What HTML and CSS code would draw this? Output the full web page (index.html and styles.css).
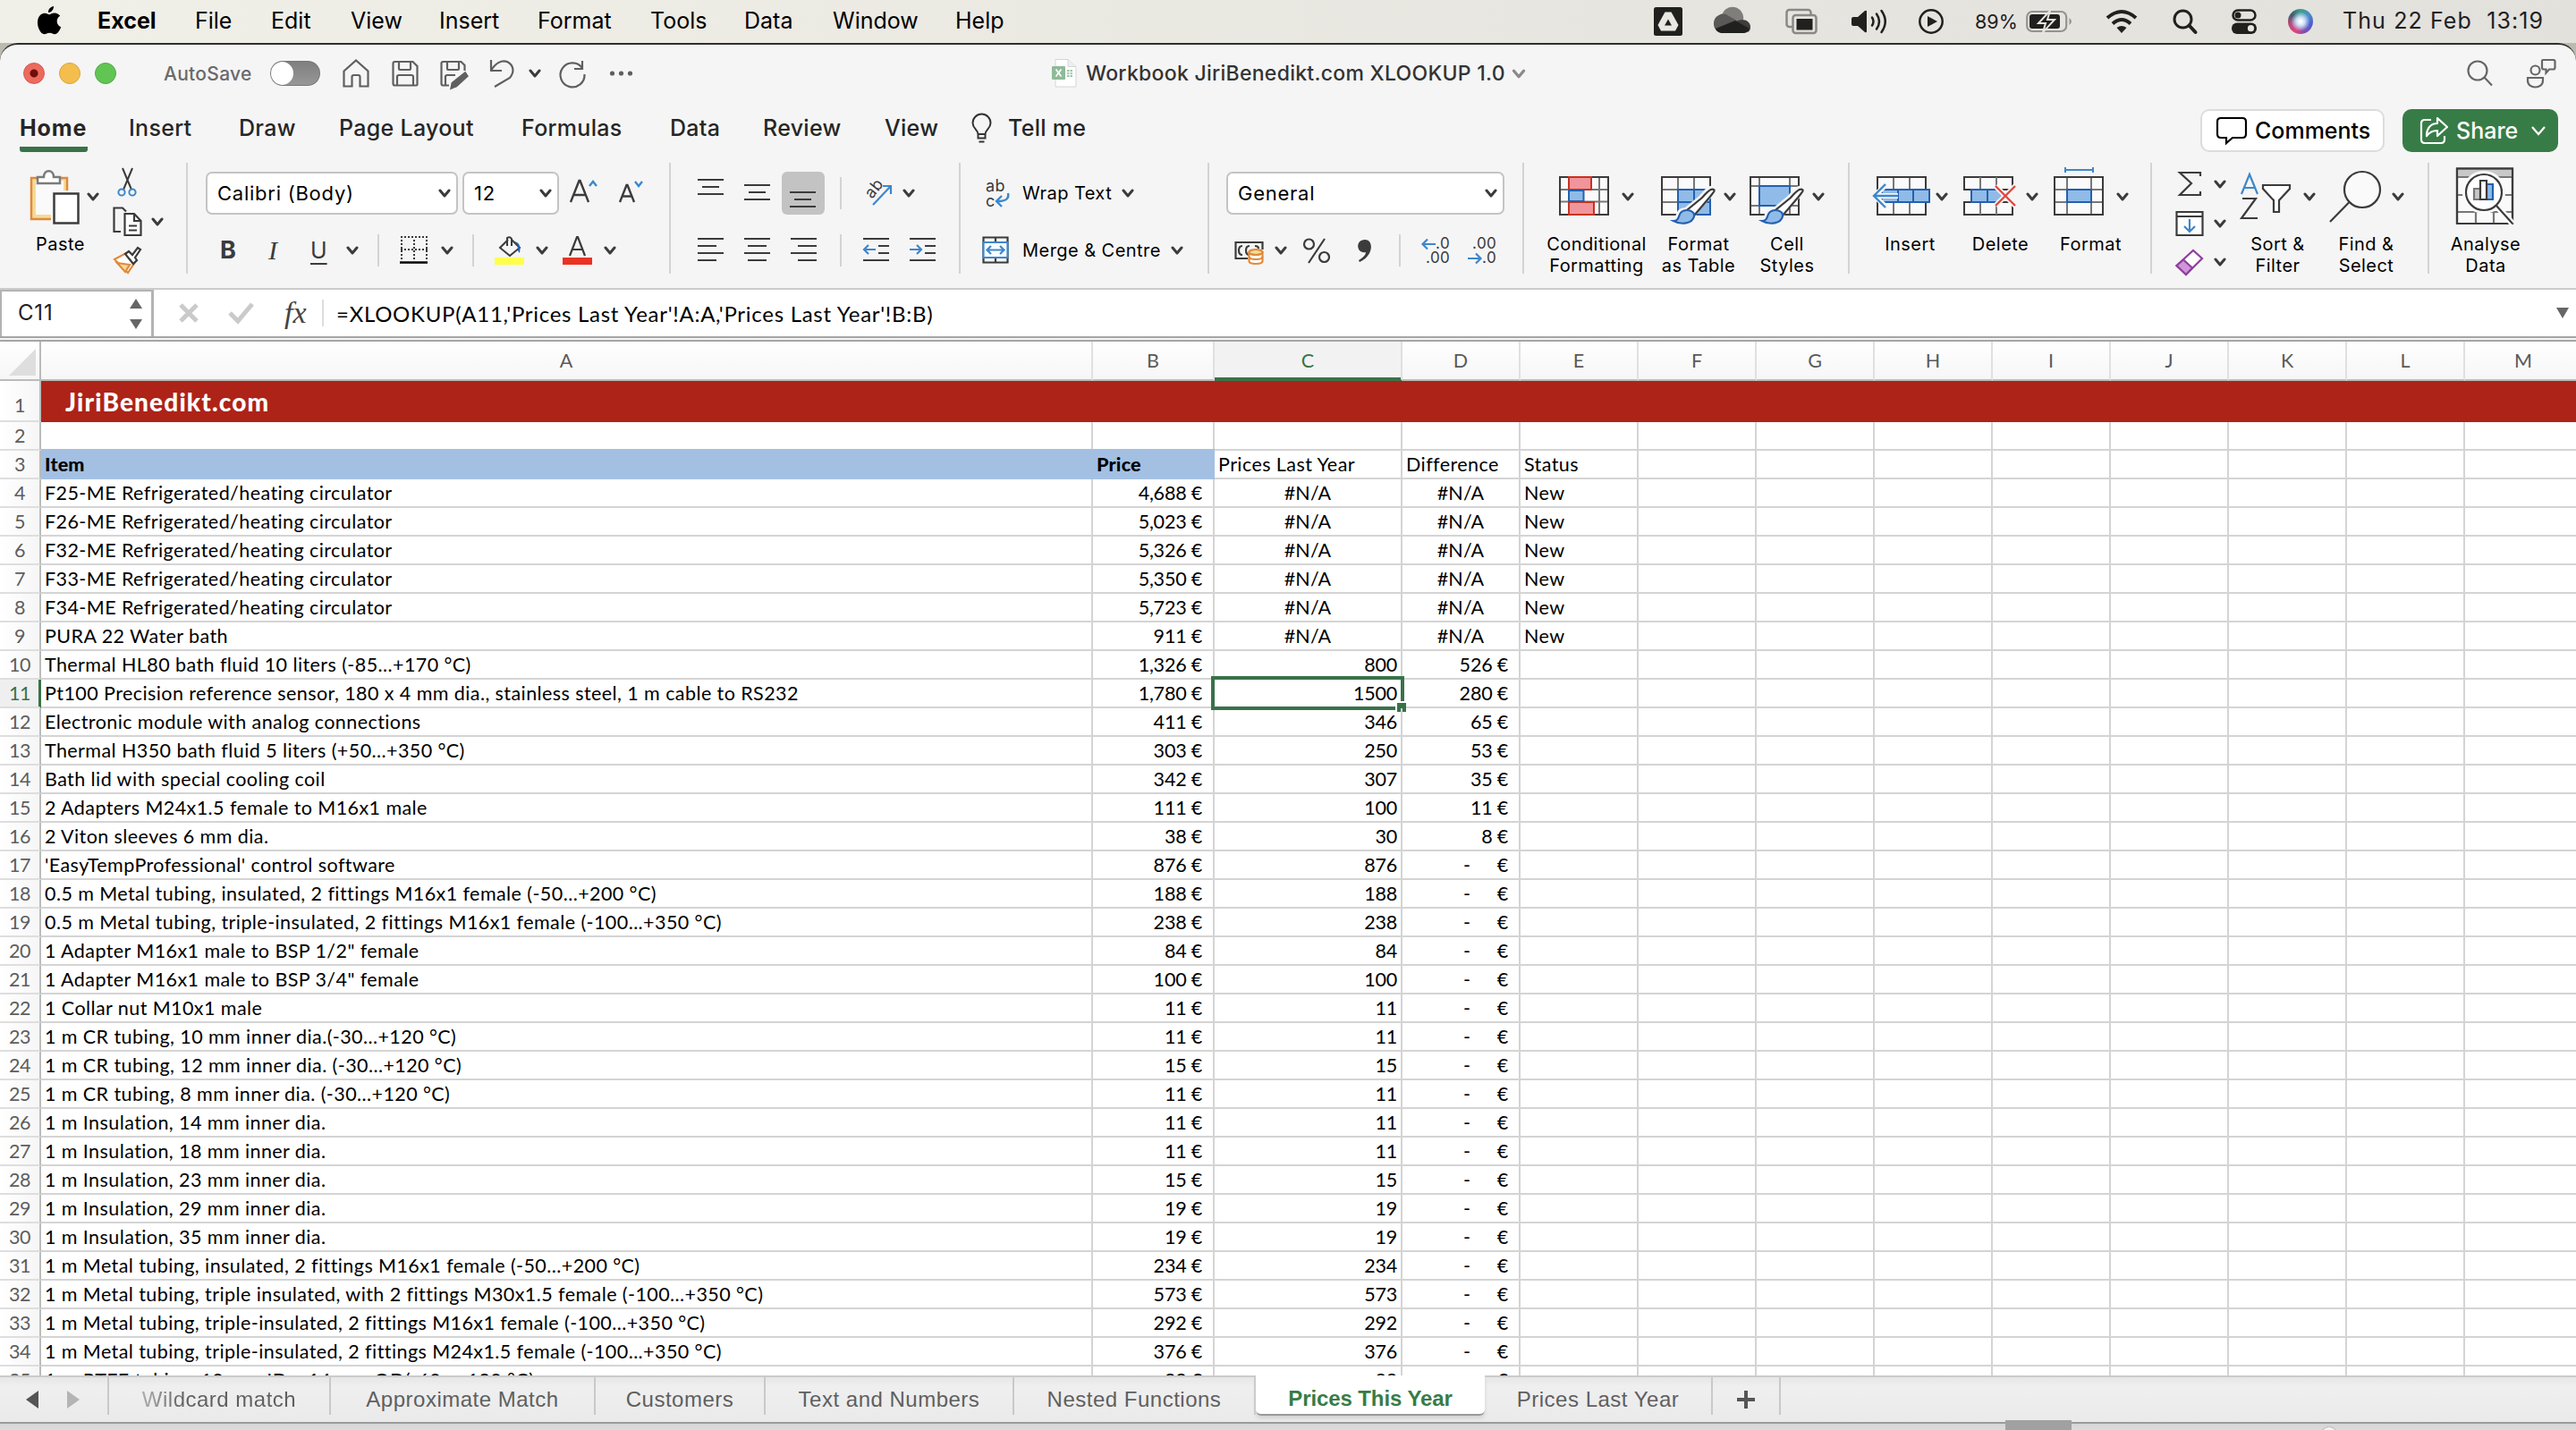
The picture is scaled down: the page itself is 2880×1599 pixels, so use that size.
FILE: index.html
```
<!DOCTYPE html>
<html lang="en">
<head>
    <meta charset="UTF-8">
    <meta name="viewport" content="width=device-width, initial-scale=1.0">
    <title>Workbook JiriBenedikt.com XLOOKUP 1.0</title>
    <link rel="stylesheet" href="styles.css">
</head>
<body>
    <!-- shared icons -->
    <svg class="defs" width="0" height="0">
        <symbol id="chev" viewBox="0 0 14 10"><path d="M2 2l5 6 5-6" fill="none" stroke="currentColor" stroke-width="3" stroke-linecap="round" stroke-linejoin="round"/></symbol>
        <symbol id="brush" viewBox="0 0 66 66" overflow="visible">
            <path d="M59 24c-4-2-9 4-14 10L28 48c-7 0-8 4-9 8-1 3-3 4-5 5 8 5 20 4 22-5 1-3 0-4 0-5l18-19c4-4 7-7 5-8z" fill="#f5f5f5" stroke="#f5f5f5" stroke-width="6"/>
            <path d="M59 25c-3-2-8 3-13 9L29 48l8 6 17-20c4-5 7-8 5-9z" fill="#fff" stroke="#3b3b3b" stroke-width="2.2"/>
            <path d="M29 48c-6 0-8 3-9 7-1 4-3 5-6 5 9 5 21 3 23-5 1-4-3-7-8-7z" fill="#90bbe8" stroke="#2460ae" stroke-width="2.2"/>
        </symbol>
    </svg>

    <header class="menubar">
        <nav class="menus">
            <svg class="apple" width="28" height="32" viewBox="0 0 28 32"><path d="M19 0c.3 3.600-2.600 7-6 7C12.600 3.500 15.800.4 19 0zM14 9.200c1.400 0 3.200-1.700 6-1.700 2.500 0 4.900 1.300 6.200 3.300-5.200 3-4.400 10.400 1 12.400-1.200 3.500-4 8-7 8-2.200 0-3-1.400-5.800-1.400s-3.700 1.400-5.800 1.400C4.300 31.200 1 24 1 18.300 1 11.500 5 7.700 9 7.700c2.300 0 3.800 1.500 5 1.500z"/></svg>
            <b>Excel</b><span>File</span><span>Edit</span><span>View</span><span>Insert</span><span>Format</span><span>Tools</span><span>Data</span><span>Window</span><span>Help</span>
        </nav>
        <div class="tray">
            <svg width="32" height="32" viewBox="0 0 32 32"><rect width="32" height="32" rx="2.500" fill="#20201e"/><path d="M12.500 5.500h7l8 14.500-3.500 6.500H8L4.500 20z" fill="#e9e7e1"/><path d="M16 13.500l4 7h-8z" fill="#20201e"/></svg>
            <svg width="42" height="28" viewBox="0 0 42 28"><path d="M9 8a12 12 0 0 1 24 4l-9 2z" fill="#7f7e7b"/><path d="M0 17A10.500 10.500 0 0 1 17 8l14 8-27 9a10 10 0 0 1-4-8z" fill="#5a5957"/><path d="M24 15c7-6 17-2 17 5 0 3-1 5-3 6z" fill="#3e3d3b"/><path d="M2 22l22-9 16 9c-2 4-4 5-7 5H10c-4 0-7-2-8-5z" fill="#20201e"/></svg>
            <svg width="36" height="30" viewBox="0 0 36 30" fill="none"><rect x="1.500" y="2" width="27" height="19" rx="3" stroke="#8a8986" stroke-width="2.500"/><rect x="8.500" y="8" width="26" height="20" rx="3" fill="#e7e5df" stroke="#8a8986" stroke-width="2.500"/><rect x="12.500" y="12" width="18" height="12.500" fill="#20201e"/></svg>
            <svg width="40" height="28" viewBox="0 0 40 28" fill="none" stroke="#20201e" stroke-width="2.500" stroke-linecap="round"><path d="M0 11q0-2 2-2h5l8-7q2-1 2 1v22q0 2-2 1l-8-7H2q-2 0-2-2z" fill="#20201e" stroke="none"/><path d="M23 9.500q3 4.500 0 9M28 5.500q6 8.500 0 17M33.500 2q8.500 12 0 24"/></svg>
            <svg width="28" height="28" viewBox="0 0 28 28"><circle cx="14" cy="14" r="12.700" fill="none" stroke="#20201e" stroke-width="2.500"/><path d="M10 8l11 6-11 6z" fill="#20201e"/></svg>
            <span class="percent">89%</span>
            <svg width="52" height="26" viewBox="0 0 52 26"><rect x="1.200" y="2" width="44" height="22" rx="6" fill="none" stroke="#94938f" stroke-width="2.200"/><rect x="4" y="5" width="34" height="16" rx="3" fill="#20201e"/><path d="M48.500 9q5 4 0 8z" fill="#94938f"/><path d="M27 1L14 15h8l-3 10 13-14h-8z" fill="#20201e" stroke="#e7e5df" stroke-width="2"/></svg>
            <svg width="36" height="26" viewBox="0 0 36 26" fill="none" stroke="#20201e" stroke-width="4"><path d="M2 9q16-14 32 0M8 15.500q10-9 20 0"/><path d="M18 26l-5.500-6q5.500-4 11 0z" fill="#20201e" stroke="none"/></svg>
            <svg width="28" height="28" viewBox="0 0 28 28" fill="none" stroke="#20201e" stroke-width="3"><circle cx="11.500" cy="11.500" r="9.500"/><path d="M18.500 18.500l7 7.500" stroke-width="4" stroke-linecap="round"/></svg>
            <svg width="28" height="28" viewBox="0 0 28 28"><rect x="1.500" y="1.500" width="25" height="11" rx="5.500" fill="none" stroke="#20201e" stroke-width="2.500"/><circle cx="7" cy="7" r="3.500" fill="#20201e"/><rect x="0" y="15.500" width="28" height="12.500" rx="6" fill="#20201e"/><circle cx="21.500" cy="21.700" r="3.600" fill="#e7e5df"/></svg>
            <i class="siri"></i>
            <span class="clock">Thu 22 Feb  13:19</span>
        </div>
    </header>

    <main class="window">
        <div class="titlebar">
            <div class="quick">
                <i class="light close"></i><i class="light minimise"></i><i class="light zoom"></i>
                <span class="autosave">AutoSave</span>
                <i class="toggle"></i>
                <svg width="30" height="32" viewBox="0 0 30 32"><path d="M1.500 13.500L15 1.500l13.500 12V30.500h-9V20q0-2-2-2h-5q-2 0-2 2v10.500h-9z"/></svg>
                <svg width="30" height="32" viewBox="0 0 30 32"><path d="M3.500 3h20l5 5v20.500q0 1-1 1h-24q-2 0-2-2V5q0-2 2-2zM8 3v8q0 1 1 1h11q1 0 1-1V3M6 29.500V20q0-2 2-2h14q2 0 2 2v9.500"/></svg>
                <svg width="32" height="32" viewBox="0 0 32 32"><path d="M10 29.500H3.500q-2 0-2-2V5q0-2 2-2h20l4 4v6M8 3v8q0 1 1 1h11q1 0 1-1V3M6 29.500V20q0-2 2-2h9"/><path d="M28 16l2 3-12 11-5 2 1-5z" fill="#5f5f5f" stroke-width="3"/></svg>
                <svg width="30" height="32" viewBox="0 0 30 32"><path d="M2 1v12h12M2 13C7 4 14 1 20 3c8 4 8 12 3 18L6 31"/></svg>
                <svg class="chev" width="14" height="10"><use href="#chev"/></svg>
                <svg width="30" height="32" viewBox="0 0 30 32"><path d="M26 2v9h-9M26 10A13.500 13.500 0 1 0 28.500 17"/></svg>
                <svg width="28" height="32" viewBox="0 0 28 32"><g fill="#5f5f5f" stroke="none"><circle cx="3.500" cy="16" r="2.600"/><circle cx="13.500" cy="16" r="2.600"/><circle cx="23.500" cy="16" r="2.600"/></g></svg>
            </div>
            <div class="doc">
                <svg width="28" height="32" viewBox="0 0 28 32"><path d="M4 .5h14l9 8V31H4z" fill="#fff" stroke="#d5d5d5"/><path d="M18 .5v8h9" fill="#eee" stroke="#d5d5d5"/><path d="M17 12h6v8h-6z" fill="#9cc5a6"/><path d="M17 14.700h6M17 17.400h6M20 12v8" stroke="#fff"/><rect y="8" width="15" height="15" rx="1" fill="#8fba99"/><path d="M4.500 11.500l6 8M10.500 11.500l-6 8" stroke="#fff" stroke-width="1.800"/></svg>
                <span>Workbook JiriBenedikt.com XLOOKUP 1.0</span>
                <svg class="grey" width="18" height="11"><use href="#chev"/></svg>
            </div>
            <div class="corner">
                <svg width="30" height="30" viewBox="0 0 30 30"><circle cx="12" cy="12" r="10.500"/><path d="M19.500 19.500l8.500 9"/></svg>
                <svg width="34" height="34" viewBox="0 0 34 34"><circle cx="10.500" cy="13.500" r="5"/><path d="M2 22h17v3c0 10-17 10-17 0zM19 2h12q1.500 0 1.500 1.500v7q0 2-2 2H26l-3.500 4v-4H20q-2 0-2-2V3q0-1 1-1z"/></svg>
            </div>
        </div>

        <div class="tabs">
            <nav class="tablist">
                <b class="active">Home</b><span>Insert</span><span>Draw</span><span>Page Layout</span><span>Formulas</span><span>Data</span><span>Review</span><span>View</span>
                <svg width="24" height="34" viewBox="0 0 24 34" fill="none" stroke="#333" stroke-width="2"><path d="M7.500 23c0-5-6-6-6-12.500a10 10 0 0 1 20 0C21.500 17 15.500 18 15.500 23zM7.500 22v5.500h8V22M8.500 31.500h6"/></svg>
                <span>Tell me</span>
            </nav>
            <div class="actions">
                <button class="comments"><svg width="34" height="32" viewBox="0 0 34 32" fill="none" stroke="#000" stroke-width="2.200"><path d="M5 2h24q4 0 4 4v14q0 4-4 4H18l-7 6v-6H5q-4 0-4-4V6q0-4 4-4z"/></svg>Comments</button>
                <button class="share"><svg width="32" height="32" viewBox="0 0 32 32" fill="none" stroke="#fff" stroke-width="2.200" stroke-linejoin="round"><path d="M13 4H6Q2 4 2 8v18q0 4 4 4h18q4 0 4-4v-4"/><path d="M20 2l11 10-11 10v-6c-6 0-9 2-12 6 0-8 4-14 12-14z"/></svg>Share<svg width="18" height="12" viewBox="0 0 18 12" fill="none" stroke="#fff" stroke-width="2.200"><path d="M2 2l7 8 7-8"/></svg></button>
            </div>
        </div>

        <div class="ribbon">
            <section class="group clipboard">
                <div class="big paste">
                    <div class="art">
                        <svg width="58" height="64" viewBox="0 0 58 64"><path d="M2 11h40v46H2z" fill="#f5db96" stroke="#e08a3c" stroke-width="2.500"/><path d="M7 14v38h31V14z" fill="#fafafa"/><path d="M9 17v-7h7c0-9 11-9 11 0h7v7z" fill="#fff" stroke="#7b7b7b" stroke-width="2.500"/><path d="M24 25h35v39H24z" fill="#f5f5f5"/><path d="M27.500 28.500h27v33h-27z" fill="#fff" stroke="#3b3b3b" stroke-width="2.500"/></svg>
                        <svg class="chev" width="14" height="10"><use href="#chev"/></svg>
                    </div>
                    <span>Paste</span>
                </div>
                <div class="stack">
                    <div><svg width="32" height="32" viewBox="0 0 32 32" fill="none" stroke-width="2"><path d="M11 0l10 24M22 0L12 24" stroke="#3b3b3b"/><circle cx="10" cy="27" r="3.600" stroke="#3e87cb"/><circle cx="22" cy="27" r="3.600" stroke="#3e87cb"/></svg></div>
                    <div><svg width="34" height="34" viewBox="0 0 34 34" fill="none" stroke="#3b3b3b" stroke-width="2.200"><path d="M9 28H1.500V1.500H11l4 4"/><path d="M13.500 8H24l7.500 8v16h-18z" fill="#fff"/><path d="M24 8v8h7.500M18 21.500h9M18 26.500h9"/></svg><svg class="chev" width="14" height="10"><use href="#chev"/></svg></div>
                    <div><svg width="34" height="32" viewBox="0 0 34 32" fill="none" stroke-width="2.200"><path d="M2 15l13-7 10 10-8 12z" fill="#fff" stroke="#e08a3c"/><path d="M5 19l14 2-5 8z" fill="#f5db96" stroke="#e08a3c"/><path d="M14 9l4-3 4 4 6-8 3 2-6 9 2 3-4 4z" fill="#fff" stroke="#3b3b3b"/></svg></div>
                </div>
            </section>

            <section class="group font">
                <div class="row">
                    <div class="select">Calibri (Body)<svg class="chev" width="14" height="10"><use href="#chev"/></svg></div>
                    <div class="select">12<svg class="chev" width="14" height="10"><use href="#chev"/></svg></div>
                    <svg width="32" height="32" viewBox="0 0 32 32" fill="none" stroke="#3b3b3b" stroke-width="2.400"><path d="M1 26L10.500 2h1L21 26M4.500 18h13"/><path d="M22 8l4-5 4 5" stroke="#3e87cb"/></svg>
                    <svg width="32" height="32" viewBox="0 0 32 32" fill="none" stroke="#3b3b3b" stroke-width="2.400"><path d="M1 26L8.500 7h1L17 26M4 19.500h10"/><path d="M18 3l4 5 4-5" stroke="#3e87cb"/></svg>
                </div>
                <div class="row second">
                    <b class="letter bold">B</b><i class="letter italic">I</i><u class="letter">U</u><svg class="chev" width="14" height="10"><use href="#chev"/></svg>
                    <i class="sep"></i>
                    <svg width="32" height="32" viewBox="0 0 32 32" fill="none" stroke="#3b3b3b" stroke-width="2"><path d="M1 1h30M1 15h30M2 4v22M16 4v22M30 4v22" stroke-dasharray="2 2"/><path d="M0 29.500h31" stroke="#000" stroke-width="2.500"/></svg>
                    <svg class="chev" width="14" height="10"><use href="#chev"/></svg>
                    <i class="sep"></i>
                    <svg width="34" height="32" viewBox="0 0 34 32" fill="none" stroke="#3b3b3b" stroke-width="2"><path d="M14 11V2q3-2 5 1v8M19 4l9 9-11 9L6 13l9-9"/><path d="M22 6q8 1 6 13-3-3-2-8z" fill="#2460ae" stroke="none"/><path d="M0 24h33v8H0z" fill="#ffff4c" stroke="none"/></svg>
                    <svg class="chev" width="14" height="10"><use href="#chev"/></svg>
                    <svg width="34" height="32" viewBox="0 0 34 32" fill="none" stroke="#3b3b3b" stroke-width="2.200"><path d="M8 22L16 1h1l8 21M11 15h11"/><path d="M0 24h33v8H0z" fill="#e93323" stroke="none"/></svg>
                    <svg class="chev" width="14" height="10"><use href="#chev"/></svg>
                </div>
            </section>

            <section class="group align">
                <div class="row">
                    <svg class="lines" width="30" height="32" viewBox="0 0 30 32"><path d="M0 1h29M5 9h19M0 17h29"/></svg>
                    <svg class="lines" width="30" height="32" viewBox="0 0 30 32"><path d="M0 7h29M5 15h19M0 23h29"/></svg>
                    <span class="pressed"><svg class="lines" width="30" height="32" viewBox="0 0 30 32"><path d="M0 15h29M5 23h19M0 31h29"/></svg></span>
                    <i class="sep"></i>
                    <svg width="34" height="32" viewBox="0 0 34 32" fill="none" stroke="#3e87cb" stroke-width="2.200"><text transform="translate(10 23) rotate(-52)" class="small-ab">ab</text><path d="M11 29L31 8M22 8h9v9"/></svg>
                    <svg class="chev" width="14" height="10"><use href="#chev"/></svg>
                </div>
                <div class="row second">
                    <svg class="lines" width="30" height="32" viewBox="0 0 30 32"><path d="M0 3h29M0 11h21M0 19h29M0 27h21"/></svg>
                    <svg class="lines" width="30" height="32" viewBox="0 0 30 32"><path d="M0 3h29M4 11h21M0 19h29M4 27h21"/></svg>
                    <svg class="lines" width="30" height="32" viewBox="0 0 30 32"><path d="M0 3h29M8 11h21M0 19h29M8 27h21"/></svg>
                    <i class="sep"></i>
                    <svg class="lines" width="30" height="32" viewBox="0 0 30 32"><path d="M0 3h29M17 11h12M17 19h12M0 27h29"/><path d="M14 15H1M6 10l-5 5 5 5" stroke="#3e87cb"/></svg>
                    <svg class="lines" width="30" height="32" viewBox="0 0 30 32"><path d="M0 3h29M17 11h12M17 19h12M0 27h29"/><path d="M0 15h13M8 10l5 5-5 5" stroke="#3e87cb"/></svg>
                </div>
            </section>

            <section class="group wrap">
                <div class="row">
                    <svg width="32" height="34" viewBox="0 0 32 34"><text x="4" y="15" class="small-ab">ab</text><text x="4" y="32" class="small-ab">c</text><path d="M29 17q2 8-9 9h-3M22 20l-6 6 6 6" fill="none" stroke="#3e87cb" stroke-width="2.400"/></svg>
                    <span>Wrap Text</span><svg class="chev" width="14" height="10"><use href="#chev"/></svg>
                </div>
                <div class="row second">
                    <svg width="32" height="32" viewBox="0 0 32 32" fill="none" stroke="#3b3b3b" stroke-width="2.200"><path d="M1.500 1.500h27v28h-27zM15 1v6M15 24v6"/><path d="M1.500 7h27v17h-27z" fill="#f9fcff" stroke="#3e87cb"/><path d="M6 15.500h18M10 11l-4.500 4.500L10 20M20 11l4.500 4.500L20 20" stroke="#3e87cb"/></svg>
                    <span>Merge &amp; Centre</span><svg class="chev" width="14" height="10"><use href="#chev"/></svg>
                </div>
            </section>

            <section class="group number">
                <div class="row"><div class="select">General<svg class="chev" width="14" height="10"><use href="#chev"/></svg></div></div>
                <div class="row second">
                    <svg width="34" height="32" viewBox="0 0 34 32" fill="none" stroke="#3b3b3b" stroke-width="2.200"><path d="M15 25H1.500V7h30v8"/><path d="M9 11q-4 0-4 5t4 5M17 11q-4 0-4 5t4 5M23 11q4 0 4 3"/><path d="M16.500 18v10c0 4 15 4 15 0V18z" fill="#fff" stroke="#e08a3c"/><ellipse cx="24" cy="18" rx="7.500" ry="3" fill="#f5db96" stroke="#e08a3c"/><path d="M16.500 23c0 4 15 4 15 0" stroke="#e08a3c"/></svg>
                    <svg class="chev" width="14" height="10"><use href="#chev"/></svg>
                    <svg width="32" height="32" viewBox="0 0 32 32" fill="none" stroke="#3b3b3b" stroke-width="2.200"><circle cx="7.500" cy="9" r="5.500"/><circle cx="24.500" cy="23.500" r="5.500"/><path d="M25 3L7 30"/></svg>
                    <svg width="18" height="32" viewBox="0 0 18 32"><path d="M9 4c10 0 10 18-6 25l-1-2c5-3 8-6 8-9C-1 20-2 4 9 4z" fill="#3b3b3b"/></svg>
                    <i class="sep"></i>
                    <svg width="34" height="32" viewBox="0 0 34 32" fill="none" stroke="#3e87cb" stroke-width="2.200"><text x="16" y="14" class="dec">.0</text><text x="5" y="30" class="dec">.00</text><path d="M16 9H2M7 3.500L1.500 9 7 14.500"/></svg>
                    <svg width="34" height="32" viewBox="0 0 34 32" fill="none" stroke="#3e87cb" stroke-width="2.200"><text x="5" y="14" class="dec">.00</text><text x="16" y="30" class="dec">.0</text><path d="M0 25h14M9 19.500l5.500 5.500L9 30.500"/></svg>
                </div>
            </section>

            <section class="group styles">
                <div class="big">
                    <div class="art"><svg width="66" height="66" viewBox="0 0 66 66" fill="none" stroke="#3b3b3b" stroke-width="2"><path d="M1 11h54v42H1z" fill="#fafafa"/><path d="M1 25h54M1 38.500h54M11 11v42M45 11v42" stroke="#777"/><path d="M1 11h54v42H1z"/><path d="M11 11h25v14H11zM11 39h28v14H11z" fill="#f0959b" stroke="#c7321f"/><path d="M11 26h16.500v12H11z" fill="#90bbe8" stroke="#2460ae"/></svg><svg class="chev" width="14" height="10"><use href="#chev"/></svg></div>
                    <span>Conditional<br>Formatting</span>
                </div>
                <div class="big">
                    <div class="art"><svg width="66" height="66" viewBox="0 0 66 66" fill="none" stroke="#3b3b3b" stroke-width="2"><path d="M1 11h54v42H1z" fill="#fafafa"/><path d="M1 25h54M1 39h54M19 11v42M37 11v42" stroke="#777"/><path d="M1 11h54v42H1z"/><path d="M19 25h36v28H19zM19 39h36M37 25v28" fill="#90bbe8" stroke="#2460ae"/><use href="#brush"/></svg><svg class="chev" width="14" height="10"><use href="#chev"/></svg></div>
                    <span>Format<br>as Table</span>
                </div>
                <div class="big">
                    <div class="art"><svg width="66" height="66" viewBox="0 0 66 66" fill="none" stroke="#3b3b3b" stroke-width="2"><path d="M1 11h54v42H1z" fill="#fafafa"/><path d="M1 21h54M1 43h54M11 11v42M45 11v42" stroke="#777"/><path d="M1 11h54v42H1z"/><path d="M11 21h34v22H11z" fill="#90bbe8" stroke="#2460ae"/><use href="#brush"/></svg><svg class="chev" width="14" height="10"><use href="#chev"/></svg></div>
                    <span>Cell<br>Styles</span>
                </div>
            </section>

            <section class="group cells">
                <div class="big">
                    <div class="art"><svg width="66" height="66" viewBox="0 0 66 66" fill="none" stroke="#3b3b3b" stroke-width="2"><path d="M5 11h54v42H5z" fill="#fafafa"/><path d="M23 11v42M41 11v42" stroke="#777"/><path d="M5 11h54v42H5z"/><path d="M10 25h53v14H10zM28 25v14M45 25v14" fill="#90bbe8" stroke="#2460ae"/><path d="M28 32H4M15 19L2 32l13 13" stroke="#f5f5f5" stroke-width="6"/><path d="M28 32H2M14 19L1 32l13 13" stroke="#3e87cb" stroke-width="2.400"/></svg><svg class="chev" width="14" height="10"><use href="#chev"/></svg></div>
                    <span>Insert</span>
                </div>
                <div class="big">
                    <div class="art"><svg width="66" height="66" viewBox="0 0 66 66" fill="none" stroke="#3b3b3b" stroke-width="2"><path d="M1 25V11h54v14zM1 39v14h54V39z" fill="#fafafa"/><path d="M19 11v14M37 11v14M19 39v14M37 39v14" stroke="#777"/><path d="M9 25h32l7 7-7 7H9zM27 25v14" fill="#90bbe8" stroke="#2460ae"/><path d="M36 21l22 22M58 21L36 43" stroke="#f5f5f5" stroke-width="6"/><path d="M36 21l22 22M58 21L36 43" stroke="#e2463c" stroke-width="2.400"/></svg><svg class="chev" width="14" height="10"><use href="#chev"/></svg></div>
                    <span>Delete</span>
                </div>
                <div class="big">
                    <div class="art"><svg width="66" height="66" viewBox="0 0 66 66" fill="none" stroke="#3b3b3b" stroke-width="2"><path d="M1 11h54v42H1z" fill="#fafafa"/><path d="M1 25h54M1 39h54M15 11v42M42 11v42" stroke="#777"/><path d="M1 11h54v42H1z"/><path d="M15 25h27v14H15z" fill="#90bbe8" stroke="#2460ae"/><path d="M13 0v6M13 3h31M44 0v6" stroke="#3e87cb"/></svg><svg class="chev" width="14" height="10"><use href="#chev"/></svg></div>
                    <span>Format</span>
                </div>
            </section>

            <section class="group editing">
                <div class="stack">
                    <div><svg width="32" height="32" viewBox="0 0 32 32" fill="none" stroke="#3b3b3b" stroke-width="2.200"><path d="M28 7V3H5l13 12L5 28h23v-4"/></svg><svg class="chev" width="14" height="10"><use href="#chev"/></svg></div>
                    <div><svg width="32" height="32" viewBox="0 0 32 32" fill="none" stroke="#3b3b3b" stroke-width="2.200"><path d="M1.500 3h29v26h-29zM1.500 8h29" fill="#fff"/><path d="M16 11v14M10 19l6 6 6-6" stroke="#3e87cb"/></svg><svg class="chev" width="14" height="10"><use href="#chev"/></svg></div>
                    <div><svg width="32" height="32" viewBox="0 0 32 32" fill="none" stroke="#8f3f9f" stroke-width="2.200"><path d="M1.500 20L20 3l10 9-18 18z" fill="#fff"/><path d="M1.500 20L9 13.500l10 9L12 30z" fill="#cf97d9"/></svg><svg class="chev" width="14" height="10"><use href="#chev"/></svg></div>
                </div>
                <div class="big">
                    <div class="art"><svg width="66" height="66" viewBox="0 0 66 66" fill="none" stroke="#3b3b3b" stroke-width="2.200"><path d="M1 30L10 8l9 22M4.500 23h11" stroke="#3e87cb"/><path d="M2 35h15L1 57h18"/><path d="M25 20h30v4L43 37v13h-6V37L25 24z" fill="#fff"/></svg><svg class="chev" width="14" height="10"><use href="#chev"/></svg></div>
                    <span>Sort &amp;<br>Filter</span>
                </div>
                <div class="big">
                    <div class="art"><svg width="66" height="66" viewBox="0 0 66 66" fill="none" stroke="#3b3b3b" stroke-width="2.200"><circle cx="37" cy="25" r="20" fill="#fafafa"/><path d="M22.500 39L1 61"/></svg><svg class="chev" width="14" height="10"><use href="#chev"/></svg></div>
                    <span>Find &amp;<br>Select</span>
                </div>
            </section>

            <section class="group analyse">
                <div class="big">
                    <div class="art"><svg width="66" height="66" viewBox="0 0 66 66" fill="none" stroke="#3b3b3b" stroke-width="2.200"><path d="M1 1.500h62V63H1z" fill="#fafafa"/><path d="M2 3h60v7H2z" fill="#c8c8c8" stroke="none"/><path d="M1 11h62M1 31h62M1 50h62M22 50v13M42 50v13" stroke="#777"/><path d="M1 1.500h62V63H1z"/><circle cx="31" cy="28" r="23" fill="#fafafa" stroke="#fafafa"/><path d="M45 43l18 20" stroke="#fafafa" stroke-width="7"/><circle cx="31" cy="28" r="20" fill="#fff"/><path d="M45 43l18 20"/><path d="M20 24h7v12h-7z" fill="#c8c8c8" stroke="#777"/><path d="M34 19h7v17h-7z" fill="#90bbe8" stroke="#2460ae"/><path d="M27 15h7v21h-7z" fill="#fff"/></svg></div>
                    <span>Analyse<br>Data</span>
                </div>
            </section>
        </div>

        <div class="formulabar">
            <div class="namebox">C11<svg width="14" height="36" viewBox="0 0 14 36" fill="#666"><path d="M0 12L7 1l7 11zM0 24h14L7 35z"/></svg></div>
            <svg class="cancel" width="24" height="22" viewBox="0 0 24 22"><path d="M3 2l18 18M21 2L3 20"/></svg>
            <svg class="enter" width="30" height="24" viewBox="0 0 30 24"><path d="M2 12l9 9L27 2"/></svg>
            <i class="fx">fx</i>
            <div class="formula">=XLOOKUP(A11,'Prices Last Year'!A:A,'Prices Last Year'!B:B)</div>
            <svg class="expand" width="14" height="12" viewBox="0 0 14 12"><path d="M0 0h14L7 12z" fill="#666"/></svg>
        </div>

        <div class="sheet">
            <table>
                <colgroup><col class="c-num"><col class="c-a"><col class="c-b"><col class="c-c"><col span="10" class="c-rest"></colgroup>
                <thead><tr id="letters"></tr></thead>
                <tbody id="cells"></tbody>
            </table>
        </div>

        <footer class="sheettabs">
            <div class="arrows"><svg width="62" height="22" viewBox="0 0 62 22"><path d="M14 1v20L0 11z" fill="#555"/><path d="M46 1v20l14-10z" fill="#b4b4b4"/></svg></div>
            <span class="fade">Wildcard match</span><span>Approximate Match</span><span>Customers</span><span>Text and Numbers</span><span>Nested Functions</span><b>Prices This Year</b><span>Prices Last Year</span>
            <span><svg width="22" height="22" viewBox="0 0 22 22"><path d="M11 1v20M1 11h20" stroke="#555" stroke-width="4"/></svg></span>
        </footer>
        <div class="statusbar"><i class="thumb"></i><i class="knob"></i></div>
    </main>

    <script src="script.js"></script>
</body>
</html>
```
FILE: styles.css
```
body {
    margin: 0;
    width: 2880px;
    height: 1599px;
    overflow: hidden;
    background: #bdbab2;
    font-family: Inter, sans-serif;
    color: #000;
}
.defs {
    position: absolute;
}
svg {
    flex: none;
    overflow: visible;
}
.chev {
    color: #3b3b3b;
}

/* mac menu bar */
.menubar {
    display: flex;
    justify-content: space-between;
    height: 48px;
    background: linear-gradient(90deg, #f1f0e8, #e7e5df 65%, #e3e1dc);
    font-size: 25px;
    line-height: 46px;
}
.menus {
    display: grid;
    grid-template-columns: 68px 109px 85px 89px 99px 110px 126px 105px 99px 137px 80px;
    padding-left: 41px;
    align-items: center;
}
.menus span, .menus b, .clock {
    margin-top: -2px;
}
.apple {
    margin-top: -2px;
}
.tray {
    display: grid;
    grid-template-columns: 67px 80px 74px 75px 63px 57px 89px 75px 66px 63px 61px 261px;
    align-items: center;
    color: #20201e;
}
.tray svg, .siri {
    margin-top: -1px;
}
.percent {
    font-size: 21.500px;
}
.clock {
    white-space: pre;
    letter-spacing: 1.100px;
}
.siri {
    width: 28px;
    height: 28px;
    border-radius: 50%;
    background: radial-gradient(circle at 50% 50%, #fff 5%, #c9dcf5 25%, transparent 55%), conic-gradient(#3ba08c, #4a8cc9, #4a5fd0, #7a4fb5, #e0447e, #b84a7c, #3a5d70, #3ba08c);
}

/* window */
.window {
    height: 1549px;
    background: #f5f5f5;
    border-top: 2px solid #2f302d;
    border-radius: 20px 20px 0 0;
    overflow: hidden;
}
.titlebar {
    display: grid;
    grid-template-columns: 1176px 1582px 122px;
    height: 64px;
    align-items: center;
}
.quick {
    display: grid;
    grid-template-columns: 40px 40px 77px 119px 81px 55px 54px 55px 44px 34px 56px 30px;
    padding-left: 26px;
    align-items: center;
    fill: none;
    stroke: #5f5f5f;
    stroke-width: 2.200;
}
.quick > .chev {
    stroke: none;
}
.light {
    width: 24px;
    height: 24px;
    border-radius: 50%;
    box-sizing: border-box;
}
.close {
    background: radial-gradient(circle, #6e0f08 4px, #ec6a5e 5px);
    border: 1px solid #d4574c;
}
.minimise {
    background: #f4be4f;
    border: 1px solid #d9a43c;
}
.zoom {
    background: #61c554;
    border: 1px solid #51aa44;
}
.autosave {
    font-size: 21px;
    font-weight: 500;
    letter-spacing: 0.300px;
    color: #6a6a6a;
}
.toggle {
    width: 56px;
    height: 28px;
    border-radius: 14px;
    background: radial-gradient(circle at 13px 14px, #fff 12.500px, transparent 13.500px), linear-gradient(#7e7e7e, #989898);
    box-shadow: inset 0 0 0 1px #777;
}
.doc {
    display: flex;
    align-items: center;
    font-size: 23px;
    font-weight: 500;
    letter-spacing: 0.280px;
    color: #333;
}
.doc span {
    margin: 0 6px 0 10px;
}
.grey {
    color: #8a8a8a;
}
.corner {
    display: flex;
    gap: 36px;
    align-items: center;
    fill: none;
    stroke: #666;
    stroke-width: 2.200;
}

/* ribbon tabs */
.tabs {
    display: flex;
    justify-content: space-between;
    height: 68px;
}
.tablist {
    display: grid;
    grid-template-columns: 122px 123px 112px 204px 166px 104px 136px 97px 41px 100px;
    grid-template-rows: 56px;
    padding-left: 22px;
    font-size: 25px;
    font-weight: 500;
    letter-spacing: 0.300px;
    line-height: 58px;
    color: #262626;
}
.tablist svg {
    margin-top: 13px;
}
.active {
    width: 76px;
    letter-spacing: 0.900px;
    border-bottom: 6px solid #397249;
    border-radius: 0 0 3px 3px;
    height: 50px;
}
.actions {
    display: flex;
    gap: 20px;
    padding: 8px 20px 0 0;
}
.actions button {
    display: flex;
    align-items: center;
    box-sizing: border-box;
    height: 48px;
    border-radius: 10px;
    font: 500 25px Inter, sans-serif;
}
.actions .comments {
    width: 206px;
    gap: 9px;
    padding: 0 0 0 16px;
    background: #fff;
    border: 2px solid #dcdcdc;
}
.actions .share {
    width: 174px;
    gap: 9px;
    padding: 0 0 0 19px;
    background: #377c46;
    color: #fff;
    border: none;
}
.share svg:last-child {
    margin-left: 5px;
}

/* ribbon */
.ribbon {
    display: flex;
    height: 140px;
    border-bottom: 2px solid #cbcbcb;
    font-size: 20px;
    letter-spacing: 0.450px;
}
.group {
    box-sizing: border-box;
    height: 124px;
    padding-top: 10px;
    border-right: 2px solid #d3d3d3;
}
.row {
    display: grid;
    height: 48px;
    align-items: center;
}
.second {
    margin-top: 16px;
}
.select {
    display: flex;
    justify-content: space-between;
    align-items: center;
    box-sizing: border-box;
    height: 48px;
    padding: 0 6px 0 11px;
    border: 2px solid #c4c4c4;
    border-radius: 7px;
    background: #fff;
    font-size: 22px;
    letter-spacing: 0.750px;
}
.sep {
    width: 2px;
    height: 36px;
    background: #d3d3d3;
}
.big {
    display: flex;
    flex-direction: column;
    align-items: center;
    text-align: center;
    line-height: 24px;
}
.art {
    display: flex;
    gap: 4px;
    height: 66px;
    align-items: center;
    margin-bottom: 8px;
}
.stack {
    display: grid;
    grid-template-rows: 44px 44px 42px;
    align-items: center;
}
.stack div {
    display: flex;
    gap: 11px;
    align-items: center;
}
.clipboard, .styles, .cells, .editing, .analyse {
    display: flex;
    padding-top: 5px;
}
.clipboard {
    width: 210px;
    padding-left: 33px;
}
.clipboard .stack {
    margin-left: 15px;
    margin-top: -5px;
}
.clipboard .stack div {
    gap: 9px;
}
.paste .art {
    gap: 6px;
}
.paste > span {
    margin-right: 9px;
}
.font {
    width: 540px;
}
.font .row:first-child {
    grid-template-columns: 282px 108px 40px 30px;
    column-gap: 5px;
    padding-left: 20px;
}
.font .row:first-child > svg:nth-child(3) {
    margin-left: 7px;
}
.font .row:first-child > svg:nth-child(4) {
    margin-left: 17px;
}
.font .second {
    grid-template-columns: 52px 49px 40px 35px 25px 46px 35px 25px 46px 30px 46px 20px;
    padding-left: 36px;
}
.letter {
    font-size: 27px;
    line-height: 30px;
    letter-spacing: 0;
    color: #3b3b3b;
}
.bold {
    font-weight: 700;
}
.italic {
    font-family: "Liberation Serif", serif;
    font-size: 30px;
    padding-left: 2px;
}
u.letter {
    text-decoration-thickness: 2px;
    text-underline-offset: 5px;
    font-size: 25px;
}
.align {
    width: 324px;
}
.align .row {
    grid-template-columns: 52px 52px 55px 26px 52px 30px;
    padding-left: 30px;
}
.align .row:first-child {
    grid-template-columns: 52px 42px 65px 26px 44px 30px;
}
.lines {
    fill: none;
    stroke: #3b3b3b;
    stroke-width: 2.200;
}
.pressed {
    display: flex;
    align-items: center;
    justify-content: center;
    width: 48px;
    height: 48px;
    border-radius: 6px;
    background: #c3c3c3;
}
.small-ab {
    font: 18px Inter, sans-serif;
    fill: #3b3b3b;
    stroke: none;
}
.wrap {
    width: 278px;
}
.wrap .row {
    display: flex;
    padding-left: 24px;
    gap: 11px;
}
.wrap .row span {
    padding-left: 2px;
}
.number {
    width: 352px;
}
.number .row:first-child {
    padding: 0 20px 0 19px;
}
.number .second {
    grid-template-columns: 45px 31px 61px 47px 25px 52px 34px;
    padding-left: 28px;
}
.dec {
    font: 17px Inter, sans-serif;
    fill: #3b3b3b;
    stroke: none;
}
.styles {
    width: 364px;
    padding-left: 24px;
}
.styles .big {
    width: 114px;
}
.styles .big:last-child {
    width: 84px;
}
.cells {
    width: 338px;
    padding-left: 17px;
}
.cells .big {
    width: 101px;
}
.editing {
    width: 310px;
    padding-left: 26px;
}
.editing .stack {
    margin: -3px 8px 0 0;
}
.editing .big {
    width: 99px;
}
.analyse {
    width: 163px;
    border: none;
    padding-left: 9px;
}
.analyse .big {
    width: 108px;
}

/* formula bar */
.formulabar {
    display: flex;
    align-items: center;
    height: 52px;
    background: #fff;
    border-bottom: 2px solid #a5a5a5;
}
.namebox {
    display: flex;
    justify-content: space-between;
    align-items: center;
    box-sizing: border-box;
    width: 172px;
    height: 52px;
    padding: 0 10px 4px 18px;
    border: 2px solid #b3b3b3;
    border-right: 3px solid #b3b3b3;
    border-bottom: none;
    font-size: 24px;
    letter-spacing: 0.800px;
    color: #222;
}
.namebox svg {
    margin-top: 4px;
}
.cancel, .enter {
    fill: none;
    stroke: #cacaca;
    stroke-width: 5;
    margin-left: 27px;
}
.enter {
    margin-left: 32px;
}
.fx {
    width: 42px;
    margin-left: 33px;
    border-right: 2px solid #ddd;
    font: italic 34px/30px "Liberation Serif", serif;
    color: #444;
}
.formula {
    flex: 1;
    padding: 0 0 0 14px;
    font: 24px Lato, sans-serif;
    letter-spacing: 0.720px;
}
.expand {
    margin-right: 8px;
}

/* grid */
.sheet {
    height: 1156px;
    overflow: hidden;
    margin-top: 2px;
    border-top: 2px solid #a5a5a5;
    background: #fff;
    border-bottom: 2px solid #cbcbcb;
}
table {
    table-layout: fixed;
    width: 2888px;
    border-spacing: 0;
    font: 21.500px/30px Lato, sans-serif;
}
.c-num { width: 46px; }
.c-a { width: 1176px; }
.c-b { width: 136px; }
.c-c { width: 210px; }
.c-rest { width: 132px; }
th {
    height: 42px;
    padding: 0;
    font-weight: 400;
    color: #5a5a5a;
    background: linear-gradient(#fff, #f6f6f6);
    border-right: 2px solid #e0e0e0;
    border-bottom: 2px solid #b9bcb9;
}
th:first-child {
    border-right-color: #b9bcb9;
}
th svg {
    display: block;
    margin: 4px 0 0 10px;
}
th.current {
    color: #397249;
    background: #f2f2f2;
    box-shadow: inset 0 -2px #397249;
    border-bottom-color: #397249;
}
td {
    height: 30px;
    padding: 0 4px;
    border-right: 2px solid #d4d4d4;
    border-bottom: 2px solid #d4d4d4;
    white-space: nowrap;
    letter-spacing: 0.420px;
}
td.head {
    padding: 0;
    text-align: center;
    letter-spacing: -0.500px;
    color: #5e5e5e;
    background: linear-gradient(90deg, #fff, #f6f6f6);
    border-right-color: #b9bcb9;
    border-bottom-color: #dedede;
}
td.head.current {
    color: #397249;
    background: #efefef;
    border-right-color: #397249;
    box-shadow: inset -1px 0 #397249;
}
td.price, td.last, td.diff {
    text-align: right;
    letter-spacing: -0.200px;
}
td.price, td.diff {
    padding-right: 12px;
}
td.last {
    position: relative;
}
td.na {
    text-align: center;
    letter-spacing: 0.200px;
    padding: 0 4px;
}
.dash {
    margin-right: 30px;
}
.brand td {
    height: 44px;
    vertical-align: bottom;
}
.brand td.head {
    line-height: 34px;
}
.brand td.red {
    background: #ae2318;
    border-color: #ae2318;
    color: #fff;
    font-size: 28px;
    font-weight: 900;
    line-height: 41px;
    letter-spacing: 1.150px;
    padding-left: 27px;
}
td.blue {
    position: relative;
    background: #a3c0e3;
    border-color: #a3c0e3;
    font-weight: 900;
    letter-spacing: 0.200px;
    box-shadow: 0 -2px #a3c0e3;
}
.cursor {
    position: absolute;
    inset: -4px;
    border: 4px solid #397249;
}
.cursor::after {
    content: "";
    position: absolute;
    right: -6px;
    bottom: -6px;
    width: 10px;
    height: 10px;
    background: #397249;
    border: solid #fff;
    border-width: 2px 0 0 2px;
}

/* sheet tabs */
.sheettabs {
    display: grid;
    grid-template-columns: 122px 248px 296px 190px 278px 270px 256px 255px 76px;
    height: 50px;
    background: linear-gradient(#e6e6e6, #efefef 20%, #eaeaea);
    font: 24px "Liberation Sans", sans-serif;
    letter-spacing: 0.500px;
    color: #5f5f5f;
}
.sheettabs > * {
    display: flex;
    align-items: center;
    justify-content: center;
    box-sizing: border-box;
    height: 42px;
    padding-top: 8px;
    border-right: 2px solid #c9c9c9;
}
.fade {
    background: linear-gradient(90deg, #b0b0b0 14%, #5f5f5f 35%);
    background-clip: text;
    -webkit-background-clip: text;
    color: transparent;
}
.sheettabs b {
    position: relative;
    height: 45px;
    margin-top: -2px;
    padding-top: 9px;
    background: #fff;
    border-right: none;
    border-bottom: 2px solid #999;
    border-radius: 0 0 6px 6px;
    color: #377c46;
    letter-spacing: -0.100px;
    box-shadow: 0 3px 4px #d2d2d2;
}
.statusbar {
    position: relative;
    height: 9px;
    box-sizing: border-box;
    border-top: 2px solid #9b9b9b;
    background: linear-gradient(#d6d6d6, #dcdcdc);
}
.thumb {
    position: absolute;
    left: 2242px;
    top: -4px;
    width: 74px;
    height: 12px;
    background: #a1a1a1;
}
.knob {
    position: absolute;
    left: 2595px;
    top: 4px;
    width: 18px;
    height: 18px;
    border-radius: 50%;
    background: #f4f4f4;
    box-shadow: 0 0 2px #888;
}
```
FILE: script.js
```
// item, price, last year, difference ('-' is a zero in accounting format)
const items = [
    ['F25-ME Refrigerated/heating circulator', '4,688', '#N/A', '#N/A', 'New'],
    ['F26-ME Refrigerated/heating circulator', '5,023', '#N/A', '#N/A', 'New'],
    ['F32-ME Refrigerated/heating circulator', '5,326', '#N/A', '#N/A', 'New'],
    ['F33-ME Refrigerated/heating circulator', '5,350', '#N/A', '#N/A', 'New'],
    ['F34-ME Refrigerated/heating circulator', '5,723', '#N/A', '#N/A', 'New'],
    ['PURA 22 Water bath', '911', '#N/A', '#N/A', 'New'],
    ['Thermal HL80 bath fluid 10 liters (-85...+170 °C)', '1,326', '800', '526'],
    ['Pt100 Precision reference sensor, 180 x 4 mm dia., stainless steel, 1 m cable to RS232', '1,780', '1500', '280'],
    ['Electronic module with analog connections', '411', '346', '65'],
    ['Thermal H350 bath fluid 5 liters (+50...+350 °C)', '303', '250', '53'],
    ['Bath lid with special cooling coil', '342', '307', '35'],
    ['2 Adapters M24x1.5 female to M16x1 male', '111', '100', '11'],
    ['2 Viton sleeves 6 mm dia.', '38', '30', '8'],
    ["'EasyTempProfessional' control software", '876', '876', '-'],
    ['0.5 m Metal tubing, insulated, 2 fittings M16x1 female (-50...+200 °C)', '188', '188', '-'],
    ['0.5 m Metal tubing, triple-insulated, 2 fittings M16x1 female (-100...+350 °C)', '238', '238', '-'],
    ['1 Adapter M16x1 male to BSP 1/2" female', '84', '84', '-'],
    ['1 Adapter M16x1 male to BSP 3/4" female', '100', '100', '-'],
    ['1 Collar nut M10x1 male', '11', '11', '-'],
    ['1 m CR tubing, 10 mm inner dia.(-30...+120 °C)', '11', '11', '-'],
    ['1 m CR tubing, 12 mm inner dia. (-30...+120 °C)', '15', '15', '-'],
    ['1 m CR tubing, 8 mm inner dia. (-30...+120 °C)', '11', '11', '-'],
    ['1 m Insulation, 14 mm inner dia.', '11', '11', '-'],
    ['1 m Insulation, 18 mm inner dia.', '11', '11', '-'],
    ['1 m Insulation, 23 mm inner dia.', '15', '15', '-'],
    ['1 m Insulation, 29 mm inner dia.', '19', '19', '-'],
    ['1 m Insulation, 35 mm inner dia.', '19', '19', '-'],
    ['1 m Metal tubing, insulated, 2 fittings M16x1 female (-50...+200 °C)', '234', '234', '-'],
    ['1 m Metal tubing, triple insulated, with 2 fittings M30x1.5 female (-100...+350 °C)', '573', '573', '-'],
    ['1 m Metal tubing, triple-insulated, 2 fittings M16x1 female (-100...+350 °C)', '292', '292', '-'],
    ['1 m Metal tubing, triple-insulated, 2 fittings M24x1.5 female (-100...+350 °C)', '376', '376', '-'],
    ['1 m PTFE tubing, 10 mm ID x 14 mm OD(-60...+130 °C)', '88', '88', '-']
];

const blank = n => '<td></td>'.repeat(n);

document.getElementById('letters').innerHTML =
    '<th><svg width="30" height="30"><path d="M30 0v30H0z" fill="#dedede"/></svg></th>' +
    'ABCDEFGHIJKLM'.split('').map(l => `<th class="${l === 'C' ? 'current' : ''}">${l}</th>`).join('');

let html = '<tr class="brand"><td class="head">1</td><td class="red" colspan="13">JiriBenedikt.com</td></tr>';
html += '<tr><td class="head">2</td>' + blank(13) + '</tr>';
html += '<tr><td class="head">3</td><td class="blue">Item</td><td class="blue">Price</td><td>Prices Last Year</td><td>Difference</td><td>Status</td>' + blank(8) + '</tr>';

items.forEach(([item, price, last, diff, status], i) => {
    const row = i + 4;
    const current = row === 11;
    const na = last === '#N/A' ? ' na' : '';
    const diffText = na ? diff : diff === '-' ? '<span class="dash">-</span>€' : diff + ' €';
    html += `<tr><td class="head${current ? ' current' : ''}">${row}</td><td>${item}</td>` +
        `<td class="price">${price} €</td>` +
        `<td class="last${na}">${last}${current ? '<span class="cursor"></span>' : ''}</td>` +
        `<td class="diff${na}">${diffText}</td><td>${status || ''}</td>` + blank(8) + '</tr>';
});
document.getElementById('cells').innerHTML = html;
```
